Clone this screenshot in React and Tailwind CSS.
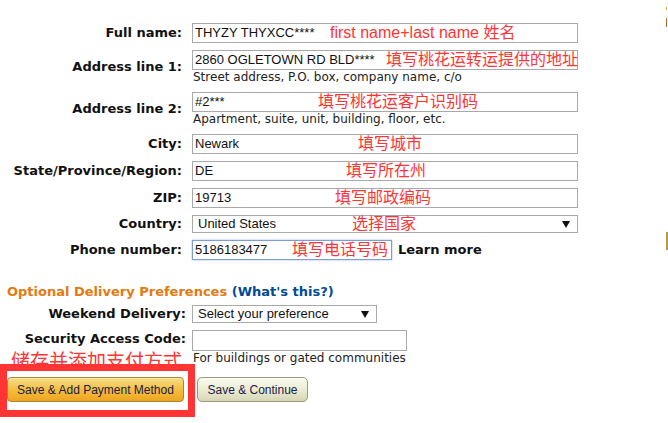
import React from 'react';

const LABEL = "font-['DejaVu_Sans',Verdana,sans-serif] font-bold text-[13px] leading-[16px] text-[#111]";
const NOTE = "absolute whitespace-nowrap text-[16px] leading-none text-[#ff3434] font-['Liberation_Sans','Noto_Sans_CJK_SC',sans-serif]";

function Caret() {
    return (
        <svg width="8" height="7" viewBox="0 0 8 7" className="shrink-0">
            <path d="M0 0 H8 L4 7 Z" fill="#111" />
        </svg>
    );
}

function TextBox({ value, note, noteLeft, width = 'w-[386px]', height = 'h-[20px]', focused }) {
    return (
        <div className={`relative ${width} ${height} flex items-center px-[2px] bg-white border ${
            focused ? 'border-[#7b9ed6] shadow-[0_0_2px_#9bb8e8]' : 'border-[#a9a9a9]'
        } font-['Liberation_Sans',Arial,sans-serif] text-[13px] leading-[16px] text-[#111]`}>
            {value}
            {note && <span className={NOTE} style={{ left: noteLeft }}>{note}</span>}
        </div>
    );
}

function SelectBox({ value, note, noteLeft, width }) {
    return (
        <div className={`relative ${width} h-[18px] flex items-center justify-between pl-[5px] pr-[7px] bg-white border border-[#a9a9a9] font-['Liberation_Sans',Arial,sans-serif] text-[13px] leading-[16px] text-[#111]`}>
            <span>{value}</span>
            {note && <span className={NOTE} style={{ left: noteLeft }}>{note}</span>}
            <Caret />
        </div>
    );
}

function Row({ label, children, mt = 'mt-[7px]', labelW = 'w-[182px]', gap = 'ml-[10px]' }) {
    return (
        <div className={`flex items-center ${mt}`}>
            <div className={`${labelW} shrink-0 text-right ${LABEL}`}>{label}</div>
            <div className={gap}>{children}</div>
        </div>
    );
}

function Helper({ children }) {
    return (
        <div className="font-['DejaVu_Sans',Verdana,sans-serif] text-[12px] leading-[14px] text-[#222] pl-[1px] whitespace-nowrap">
            {children}
        </div>
    );
}

export default function App() {
    return (
        <div className="relative w-[668px] h-[423px] bg-white overflow-hidden">
            <div className="pt-[23px]">
                <Row label="Full name:" mt="mt-0">
                    <TextBox value="THYZY THYXCC****" note="first name+last name 姓名" noteLeft={137} />
                </Row>
                <Row label="Address line 1:">
                    <TextBox value="2860 OGLETOWN RD BLD****" note="填写桃花运转运提供的地址" noteLeft={193} />
                    <Helper>Street address, P.O. box, company name, c/o</Helper>
                </Row>
                <Row label="Address line 2:" mt="mt-[8px]">
                    <TextBox value="#2***" note="填写桃花运客户识别码" noteLeft={125} />
                    <Helper>Apartment, suite, unit, building, floor, etc.</Helper>
                </Row>
                <Row label="City:" mt="mt-[8px]">
                    <TextBox value="Newark" note="填写城市" noteLeft={165} />
                </Row>
                <Row label="State/Province/Region:">
                    <TextBox value="DE" note="填写所在州" noteLeft={153} />
                </Row>
                <Row label="ZIP:">
                    <TextBox value="19713" note="填写邮政编码" noteLeft={142} />
                </Row>
                <Row label="Country:">
                    <SelectBox value="United States" note="选择国家" noteLeft={159} width="w-[386px]" />
                </Row>
                <Row label="Phone number:">
                    <div className="flex items-center">
                        <TextBox value="5186183477" note="填写电话号码" noteLeft={99} width="w-[200px]" focused />
                        <a className={`ml-[6px] ${LABEL} text-[#004b91]`}>Learn more</a>
                    </div>
                </Row>

                <div className={`mt-[24px] pl-[7px] ${LABEL}`}>
                    <span className="text-[#e47911]">Optional Delivery Preferences</span>
                    <span className="text-[#004b91]"> (What's this?)</span>
                </div>

                <Row label="Weekend Delivery:" mt="mt-[5px]" labelW="w-[186px]" gap="ml-[6px]">
                    <SelectBox value="Select your preference" width="w-[185px]" />
                </Row>
                <div className="flex mt-[7px]">
                    <div className="w-[186px] shrink-0 flex flex-col items-end">
                        <div className="h-[21px] flex items-start pt-[1px]">
                            <span className={LABEL}>Security Access Code:</span>
                        </div>
                        <div className="text-[19px] leading-[19px] mt-[-1px] text-[#ff3434] font-['Noto_Sans_CJK_SC',sans-serif] pr-[4px] whitespace-nowrap">
                            储存并添加支付方式
                        </div>
                    </div>
                    <div className="ml-[6px]">
                        <TextBox value="" width="w-[215px]" height="h-[21px]" />
                        <Helper>For buildings or gated communities</Helper>
                    </div>
                </div>

                <div className="flex gap-[13px] mt-[8px] pl-[7px] font-['Liberation_Sans',Arial,sans-serif] text-[12px] text-[#1c1a4a]">
                    <button className="w-[177px] h-[25px] rounded-[4px] border border-[#a88734] bg-gradient-to-b from-[#f8dd84] via-[#f2c03e] to-[#eea51f] shadow-[inset_0_1px_0_#fbe9b0]">
                        Save &amp; Add Payment Method
                    </button>
                    <button className="w-[111px] h-[25px] rounded-[5px] border border-[#9a9a80] bg-gradient-to-b from-[#fbfbf0] via-[#ececd4] to-[#d6d6b6]">
                        Save &amp; Continue
                    </button>
                </div>
            </div>

            <div className="absolute left-0 top-[364px] w-[195px] h-[53px] border-[7px] border-[#ff3434]" />

            <div className="absolute left-[666px] top-[7px] w-[1px] h-[3px] bg-[#e2a030]" />
            <div className="absolute left-[666px] top-[18px] w-[1px] h-[9px] bg-[#b0702a]" />
            <div className="absolute left-[666px] top-[232px] w-[2px] h-[18px] bg-[#b8954a]" />
        </div>
    );
}
